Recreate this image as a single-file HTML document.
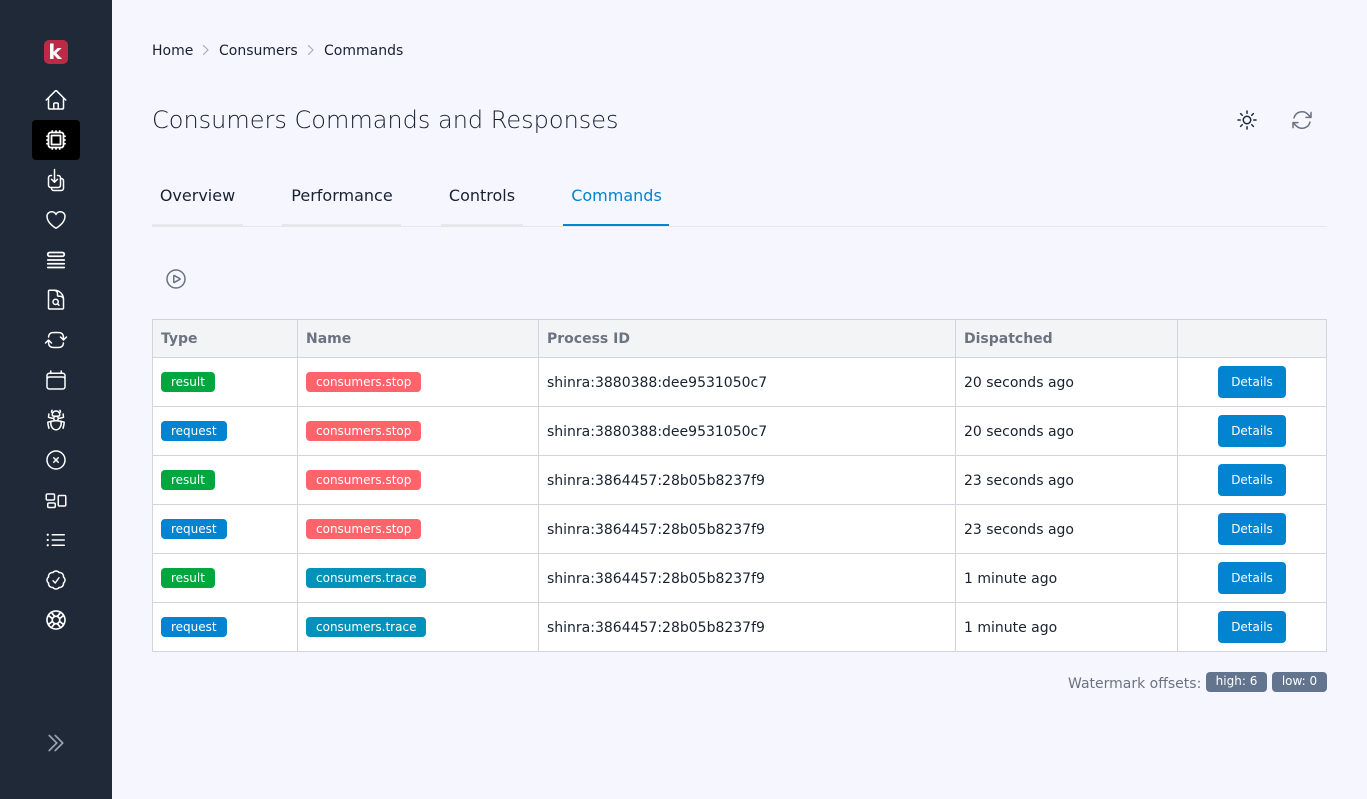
<!DOCTYPE html>
<html lang="en"><head><meta charset="utf-8"><title>Commands</title>
<style>
*{box-sizing:border-box}
html,body{margin:0;padding:0;width:1367px;height:799px;overflow:hidden;background:#f5f6ff;font-family:"DejaVu Sans","Liberation Sans",sans-serif;color:#18212f;font-size:14px}
.side{position:absolute;left:0;top:0;width:112px;height:799px;background:#1f2937}
.act{position:absolute;left:32px;top:120px;width:48px;height:40px;background:#000;border-radius:4px}
.logo{position:absolute;left:44px;top:40px;width:24px;height:24px;border-radius:5px;background:#bd2a45;color:#fff;font-weight:700;font-size:20px;line-height:24px;text-align:center;padding-right:2px}
svg.i{position:absolute;left:44px;width:24px;height:24px;fill:none;stroke:#fff;stroke-width:1.5;stroke-linecap:round;stroke-linejoin:round}
svg.p{position:absolute;fill:none;stroke-width:1.5;stroke-linecap:round;stroke-linejoin:round}
.t{position:absolute;white-space:nowrap;line-height:20px}
.title{position:absolute;left:152px;top:103px;font-size:24px;line-height:34px;font-weight:200;white-space:nowrap;letter-spacing:0;color:#18212f}
.tab{position:absolute;top:175px;height:52px;border-bottom:3px solid #e5e7eb;font-size:16px;line-height:41px;text-align:center;white-space:nowrap}
.line{position:absolute;left:152px;top:226px;width:1175px;height:1px;background:#e5e7eb}
table{position:absolute;left:152px;top:319px;width:1174px;border-collapse:collapse;table-layout:fixed;background:#fff}
td,th{border:1px solid #d1d5db;padding:0 8px;text-align:left;height:49px;font-size:14px;white-space:nowrap}
td.x{padding-top:2px}
th{height:38px;background:#f3f4f6;color:#6b7280;font-weight:700}
tr:nth-child(odd) td{background:#f9fafb}
tr.w td{background:#fff}
.b{display:inline-block;height:20px;line-height:21px;border-radius:4px;color:#fff;font-size:12px;padding:0 10px;vertical-align:middle}
.g{background:#00a63e}.bl{background:#0284d1}.r{background:#ff646b}.c{background:#0092b8}
.d{display:block;margin:0 auto;width:68px;height:32px;line-height:32px;border-radius:4px;background:#0284d1;color:#fff;font-size:12px;text-align:center}
.s{position:absolute;top:672px;height:20px;line-height:18px;border-radius:4px;background:#62748e;color:#fff;font-size:12px;text-align:center}
</style></head><body>
<div class="side">
<div class="act"></div>
<div class="logo">k</div>
<svg class="i" style="top:88px" viewBox="0 0 24 24"><path d="M2.25 12l8.954-8.955c.44-.439 1.152-.439 1.591 0L21.75 12M4.5 9.75v10.125c0 .621.504 1.125 1.125 1.125H9.75v-4.875c0-.621.504-1.125 1.125-1.125h2.25c.621 0 1.125.504 1.125 1.125V21h4.125c.621 0 1.125-.504 1.125-1.125V9.75M8.25 21h8.25"/></svg>
<svg class="i" style="top:128px;stroke-width:1.8" viewBox="0 0 24 24"><path d="M8.25 3v1.5M4.5 8.25H3m18 0h-1.5M4.5 12H3m18 0h-1.5m-15 3.75H3m18 0h-1.5M8.25 19.5V21M12 3v1.5m0 15V21m3.75-18v1.5m0 15V21m-9-1.5h10.5a2.25 2.25 0 002.25-2.25V6.75a2.25 2.25 0 00-2.25-2.25H6.75A2.25 2.25 0 004.5 6.75v10.5a2.25 2.25 0 002.25 2.25zm.75-12h9v9h-9v-9z"/></svg>
<svg class="i" style="top:168px" viewBox="0 0 24 24"><path d="M7.5 7.5h-.75A2.25 2.25 0 004.5 9.75v7.5a2.25 2.25 0 002.25 2.25h7.5a2.25 2.25 0 002.25-2.25v-7.5a2.25 2.25 0 00-2.25-2.25h-.75m-6 3.75l3 3m0 0l3-3m-3 3V1.5m6 9h.75a2.25 2.25 0 012.25 2.25v7.5a2.25 2.25 0 01-2.25 2.25h-7.5a2.25 2.25 0 01-2.25-2.25v-.75"/></svg>
<svg class="i" style="top:208px" viewBox="0 0 24 24"><path d="M21 8.25c0-2.485-2.099-4.5-4.688-4.5-1.935 0-3.597 1.126-4.312 2.733-.715-1.607-2.377-2.733-4.313-2.733C5.1 3.75 3 5.765 3 8.25c0 7.22 9 12 9 12s9-4.78 9-12z"/></svg>
<svg class="i" style="top:248px;stroke-width:1.8" viewBox="0 0 24 24"><path d="M3.75 12h16.5m-16.5 3.75h16.5m-16.5 3.75h16.5M5.625 4.5h12.75a1.875 1.875 0 010 3.75H5.625a1.875 1.875 0 010-3.75z"/></svg>
<svg class="i" style="top:288px" viewBox="0 0 24 24"><path d="M19.5 14.25v-2.625a3.375 3.375 0 00-3.375-3.375h-1.5A1.125 1.125 0 0113.5 7.125v-1.5a3.375 3.375 0 00-3.375-3.375H8.25m5.231 13.481L15 17.25m-4.5-15H5.625c-.621 0-1.125.504-1.125 1.125v16.5c0 .621.504 1.125 1.125 1.125h12.75c.621 0 1.125-.504 1.125-1.125V11.25a9 9 0 00-9-9zm3.75 11.625a2.625 2.625 0 11-5.25 0 2.625 2.625 0 015.25 0z"/></svg>
<svg class="i" style="top:328px" viewBox="0 0 24 24"><path d="M19.5 12c0-1.232-.046-2.453-.138-3.662a4.006 4.006 0 00-3.7-3.7 48.678 48.678 0 00-7.324 0 4.006 4.006 0 00-3.7 3.7c-.017.22-.032.441-.046.662M19.5 12l3-3m-3 3l-3-3m-12 3c0 1.232.046 2.453.138 3.662a4.006 4.006 0 003.7 3.7 48.656 48.656 0 007.324 0 4.006 4.006 0 003.7-3.7c.017-.22.032-.441.046-.662M4.5 12l3 3m-3-3l-3 3"/></svg>
<svg class="i" style="top:368px" viewBox="0 0 24 24"><path d="M6.75 3v2.25M17.25 3v2.25M3 18.75V7.5a2.25 2.25 0 012.25-2.25h13.5A2.25 2.25 0 0121 7.5v11.25m-18 0A2.25 2.25 0 005.25 21h13.5A2.25 2.25 0 0021 18.75m-18 0v-7.5A2.25 2.25 0 015.25 9h13.5A2.25 2.25 0 0121 11.25v7.5"/></svg>
<svg class="i" style="top:408px" viewBox="0 0 24 24"><path d="M12 12.75c1.148 0 2.278.08 3.383.237 1.037.146 1.866.966 1.866 2.013 0 3.728-2.35 6.75-5.25 6.75S6.75 18.728 6.75 15c0-1.046.83-1.867 1.866-2.013A24.204 24.204 0 0112 12.75zm0 0c2.883 0 5.647.508 8.207 1.44a23.91 23.91 0 01-1.152 6.06M12 12.75c-2.883 0-5.647.508-8.208 1.44.125 2.104.52 4.136 1.153 6.06M12 12.75a2.25 2.25 0 002.248-2.354M12 12.75a2.25 2.25 0 01-2.248-2.354M12 8.25c.995 0 1.971-.08 2.922-.236.403-.066.74-.358.795-.762a3.778 3.778 0 00-.399-2.25M12 8.25c-.995 0-1.97-.08-2.922-.236-.402-.066-.74-.358-.795-.762a3.734 3.734 0 01.4-2.253M12 8.25a2.25 2.25 0 00-2.248 2.146M12 8.25a2.25 2.25 0 012.248 2.146M8.683 5a6.032 6.032 0 01-1.155-1.002c.07-.63.27-1.222.574-1.747m.581 2.749A3.75 3.75 0 0115.318 5m0 0c.427-.283.815-.62 1.155-.999a4.471 4.471 0 00-.575-1.752M4.921 6a24.048 24.048 0 00-.392 3.314c1.668.546 3.416.914 5.223 1.082M19.08 6c.205 1.08.337 2.187.392 3.314a23.882 23.882 0 01-5.223 1.082"/></svg>
<svg class="i" style="top:448px" viewBox="0 0 24 24"><path d="M9.75 9.75l4.5 4.5m0-4.5l-4.5 4.5M21 12a9 9 0 11-18 0 9 9 0 0118 0z"/></svg>
<svg class="i" style="top:488px" viewBox="0 0 24 24"><path d="M2.25 7.125C2.25 6.504 2.754 6 3.375 6h6c.621 0 1.125.504 1.125 1.125v3.75c0 .621-.504 1.125-1.125 1.125h-6a1.125 1.125 0 01-1.125-1.125v-3.75zM14.25 8.625c0-.621.504-1.125 1.125-1.125h5.25c.621 0 1.125.504 1.125 1.125v8.25c0 .621-.504 1.125-1.125 1.125h-5.25a1.125 1.125 0 01-1.125-1.125v-8.25zM3.75 16.125c0-.621.504-1.125 1.125-1.125h5.25c.621 0 1.125.504 1.125 1.125v2.25c0 .621-.504 1.125-1.125 1.125h-5.25a1.125 1.125 0 01-1.125-1.125v-2.25z"/></svg>
<svg class="i" style="top:528px" viewBox="0 0 24 24"><path d="M8.25 6.75h12M8.25 12h12m-12 5.25h12M3.75 6.75h.007v.008H3.75V6.75zm.375 0a.375.375 0 11-.75 0 .375.375 0 01.75 0zM3.75 12h.007v.008H3.75V12zm.375 0a.375.375 0 11-.75 0 .375.375 0 01.75 0zm-.375 5.25h.007v.008H3.75v-.008zm.375 0a.375.375 0 11-.75 0 .375.375 0 01.75 0z"/></svg>
<svg class="i" style="top:568px" viewBox="0 0 24 24"><path d="M9 12.75L11.25 15 15 9.75M21 12c0 1.268-.63 2.39-1.593 3.068a3.745 3.745 0 01-1.043 3.296 3.745 3.745 0 01-3.296 1.043A3.745 3.745 0 0112 21c-1.268 0-2.39-.63-3.068-1.593a3.746 3.746 0 01-3.296-1.043 3.745 3.745 0 01-1.043-3.296A3.745 3.745 0 013 12c0-1.268.63-2.39 1.593-3.068a3.745 3.745 0 011.043-3.296 3.746 3.746 0 013.296-1.043A3.746 3.746 0 0112 3c1.268 0 2.39.63 3.068 1.593a3.746 3.746 0 013.296 1.043 3.746 3.746 0 011.043 3.296A3.745 3.745 0 0121 12z"/></svg>
<svg class="i" style="top:608px;stroke-width:1.7" viewBox="0 0 24 24"><path d="M16.712 4.33a9.027 9.027 0 011.652 1.306c.51.51.944 1.064 1.306 1.652M16.712 4.33l-3.448 4.138m3.448-4.138a9.014 9.014 0 00-9.424 0M19.67 7.288l-4.138 3.448m4.138-3.448a9.014 9.014 0 010 9.424m-4.138-5.976a3.736 3.736 0 00-.88-1.388 3.737 3.737 0 00-1.388-.88m2.268 2.268a3.765 3.765 0 010 2.528m-2.268-4.796a3.765 3.765 0 00-2.528 0m4.796 4.796c-.181.506-.475.982-.88 1.388a3.736 3.736 0 01-1.388.88m2.268-2.268l4.138 3.448m0 0a9.027 9.027 0 01-1.306 1.652c-.51.51-1.064.944-1.652 1.306m0 0l-3.448-4.138m3.448 4.138a9.014 9.014 0 01-9.424 0m5.976-4.138a3.765 3.765 0 01-2.528 0m0 0a3.736 3.736 0 01-1.388-.88 3.737 3.737 0 01-.88-1.388m2.268 2.268L7.288 19.67m0 0a9.024 9.024 0 01-1.652-1.306 9.027 9.027 0 01-1.306-1.652m0 0l4.138-3.448M4.33 16.712a9.014 9.014 0 010-9.424m4.138 5.976a3.765 3.765 0 010-2.528m0 0c.181-.506.475-.982.88-1.388a3.736 3.736 0 011.388-.88m-2.268 2.268L4.33 7.288m6.406 1.18L7.288 4.33m0 0a9.024 9.024 0 00-1.652 1.306A9.025 9.025 0 004.33 7.288"/></svg>
<svg class="i" style="top:731px;stroke:#99a1af;stroke-width:1.75" viewBox="0 0 24 24"><path d="M11.25 4.5l7.5 7.5-7.5 7.5m-6-15l7.5 7.5-7.5 7.5"/></svg>
</div>

<div class="t" style="left:152px;top:41px">Home</div>
<svg class="p" style="left:200px;top:44px;stroke:#a8adb5;stroke-width:1.2" width="12" height="12" viewBox="0 0 12 12"><path d="M3.500 1.500L8 6l-4.500 4.500"/></svg>
<div class="t" style="left:219px;top:41px">Consumers</div>
<svg class="p" style="left:305px;top:44px;stroke:#a8adb5;stroke-width:1.2" width="12" height="12" viewBox="0 0 12 12"><path d="M3.500 1.500L8 6l-4.500 4.500"/></svg>
<div class="t" style="left:324px;top:41px">Commands</div>

<div class="title">Consumers Commands and Responses</div>
<svg class="p" style="left:1235px;top:108px;stroke:#1f2937" width="24" height="24" viewBox="0 0 24 24"><path d="M12 3v2.250m6.364.386l-1.591 1.591M21 12h-2.250m-.386 6.364l-1.591-1.591M12 18.750V21m-4.773-4.227l-1.591 1.591M5.250 12H3m4.227-4.773L5.636 5.636M15.750 12a3.750 3.750 0 11-7.500 0 3.750 3.750 0 017.500 0z"/></svg>
<svg class="p" style="left:1290px;top:108px;stroke:#6b7280" width="24" height="24" viewBox="0 0 24 24"><path d="M16.023 9.348h4.992v-.001M2.985 19.644v-4.992m0 0h4.992m-4.993 0l3.181 3.183a8.250 8.250 0 0013.803-3.700M4.031 9.865a8.250 8.250 0 0113.803-3.700l3.181 3.182m0-4.991v4.990"/></svg>

<div class="line"></div>
<div class="tab" style="left:152px;width:91px">Overview</div>
<div class="tab" style="left:282px;width:119px;padding-left:1px">Performance</div>
<div class="tab" style="left:441px;width:82px">Controls</div>
<div class="tab" style="left:563px;width:106px;height:51px;border-bottom-width:2px;color:#0284d1;border-color:#0284d1;padding-left:1px">Commands</div>

<svg class="p" style="left:164px;top:267px;stroke:#6b7280" width="24" height="24" viewBox="0 0 24 24"><path d="M21 12a9 9 0 11-18 0 9 9 0 0118 0z"/><path d="M15.910 11.672a.375.375 0 010 .656l-5.603 3.113a.375.375 0 01-.557-.328V8.887c0-.286.307-.466.557-.327l5.603 3.112z"/></svg>

<table>
<colgroup><col style="width:145px"><col style="width:241px"><col style="width:417px"><col style="width:222px"><col style="width:149px"></colgroup>
<thead><tr class="w"><th>Type</th><th>Name</th><th>Process ID</th><th>Dispatched</th><th></th></tr></thead>
<tbody>
<tr class="w"><td><span class="b g">result</span></td><td><span class="b r">consumers.stop</span></td><td class="x">shinra:3880388:dee9531050c7</td><td class="x">20 seconds ago</td><td><span class="d">Details</span></td></tr>
<tr><td><span class="b bl">request</span></td><td><span class="b r">consumers.stop</span></td><td class="x">shinra:3880388:dee9531050c7</td><td class="x">20 seconds ago</td><td><span class="d">Details</span></td></tr>
<tr class="w"><td><span class="b g">result</span></td><td><span class="b r">consumers.stop</span></td><td class="x">shinra:3864457:28b05b8237f9</td><td class="x">23 seconds ago</td><td><span class="d">Details</span></td></tr>
<tr><td><span class="b bl">request</span></td><td><span class="b r">consumers.stop</span></td><td class="x">shinra:3864457:28b05b8237f9</td><td class="x">23 seconds ago</td><td><span class="d">Details</span></td></tr>
<tr class="w"><td><span class="b g">result</span></td><td><span class="b c">consumers.trace</span></td><td class="x">shinra:3864457:28b05b8237f9</td><td class="x">1 minute ago</td><td><span class="d">Details</span></td></tr>
<tr><td><span class="b bl">request</span></td><td><span class="b c">consumers.trace</span></td><td class="x">shinra:3864457:28b05b8237f9</td><td class="x">1 minute ago</td><td><span class="d">Details</span></td></tr>
</tbody></table>

<div class="t" style="left:1068px;top:674px;color:#6b7280">Watermark offsets:</div>
<div class="s" style="left:1206px;width:61px">high: 6</div>
<div class="s" style="left:1272px;width:55px">low: 0</div>
</body></html>
